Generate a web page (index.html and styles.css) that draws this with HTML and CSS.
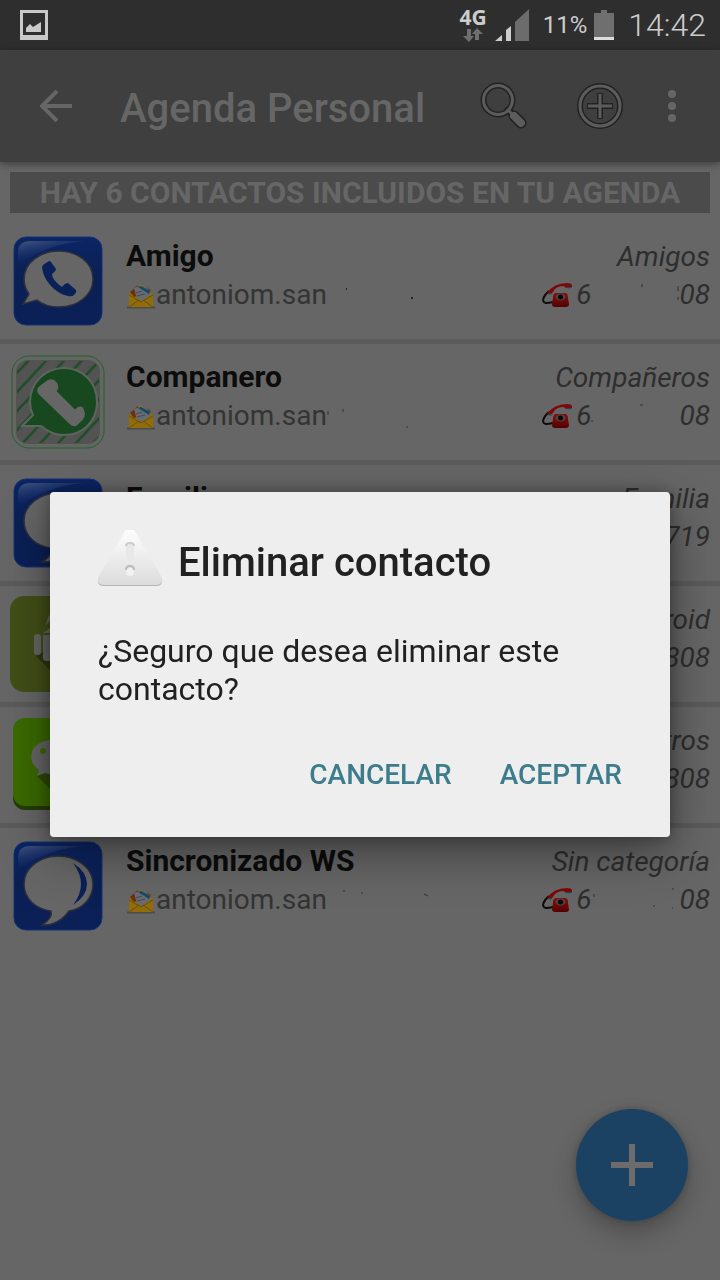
FILE: index.html
```html
<!DOCTYPE html>
<html lang="es">
<head>
<meta charset="utf-8">
<meta name="viewport" content="width=device-width, initial-scale=1">
<title>Agenda Personal</title>
<link rel="stylesheet" href="styles.css">
</head>
<body>
<svg class="defs" aria-hidden="true">
  <defs>
    <linearGradient id="blue" x1="0" y1="0" x2="0" y2="1"><stop offset="0" stop-color="#0c2564"/><stop offset=".5" stop-color="#0a1f53"/><stop offset="1" stop-color="#0a2058"/></linearGradient>
    <linearGradient id="gloss" x1="0" y1="0" x2=".6" y2="1"><stop offset="0" stop-color="#5a6a8c" stop-opacity=".7"/><stop offset=".7" stop-color="#2a4480" stop-opacity="0"/></linearGradient>
    <linearGradient id="warn" x1="0" y1="0" x2="0" y2="1"><stop offset="0" stop-color="#fff"/><stop offset="1" stop-color="#dcdcdc"/></linearGradient>
    <linearGradient id="red" x1="0" y1="0" x2="0" y2="1"><stop offset="0" stop-color="#900a0a"/><stop offset="1" stop-color="#520303"/></linearGradient>
    <linearGradient id="gold" x1="0" y1="0" x2="0" y2="1"><stop offset="0" stop-color="#8f6d1c"/><stop offset="1" stop-color="#8f6700"/></linearGradient>
    <pattern id="stripes" width="13" height="13" patternUnits="userSpaceOnUse" patternTransform="rotate(43)"><path d="M5 0V13" stroke="#1c4d25" stroke-width="2.500"/></pattern>
  </defs>
  <symbol id="tile" viewBox="0 0 96 96">
    <rect x="4" y="4" width="88" height="88" rx="12" fill="url(#blue)" stroke="#153175" stroke-width="1"/>
    <path d="M8 32V20Q8 8 20 8H76Q38 10 8 32Z" fill="url(#gloss)"/>
  </symbol>
  <symbol id="av-call" viewBox="0 0 96 96">
    <use href="#tile"/>
    <path d="M49 18C68 18 83 30 83 46S68 74 49 74C41 74 33 72 27 67L13 71L19 61Q14 54 14 46C14 30 30 18 49 18Z" fill="#666" stroke="#2c303c" stroke-width="1.500"/>
    <path d="M33 32L39 28Q40 28 41 29L46 36Q46 38 42 41Q42 47 52 54Q55 50 58 50L66 57Q67 59 64 62Q62 64 58 63C44 60 33 46 32 34Z" fill="#0a2059"/>
  </symbol>
  <symbol id="av-chat" viewBox="0 0 96 96">
    <use href="#tile"/>
    <path d="M48 18C67 18 83 30 83 46C83 60 73 71 59 73Q48 88 32 87Q43 80 41 73C25 71 14 60 14 46C14 30 30 18 48 18Z" fill="#666" stroke="#2c303c" stroke-width="1.500"/>
    <path d="M63 25Q77 34 77 46T63 67Q79 46 63 25Z" fill="#0a2059"/>
  </symbol>
  <symbol id="av-whats" viewBox="0 0 96 96">
    <rect x="2" y="2" width="92" height="92" rx="17" fill="#646664" stroke="#24602f" stroke-width="1"/>
    <rect x="6" y="6" width="84" height="84" rx="12" fill="#535353"/>
    <rect x="7" y="7" width="82" height="82" rx="10" fill="url(#stripes)"/>
    <path d="M54 14C73 14 87 29 87 48S73 81 54 81C45 81 38 78 31 72L12 72L23 61Q20 55 20 48C20 29 35 14 54 14Z" fill="#17481f" stroke="#5c665d" stroke-width="2"/>
    <path d="M29 39Q27 36 30 33L38 27Q43 25 46 29Q49 34 45 37L65 57Q69 52 72 54Q76 61 72 65L67 70Q64 73 60 69Z" fill="#666" stroke="#666" stroke-width="2" stroke-linejoin="round"/>
  </symbol>
  <symbol id="av-android" viewBox="0 0 96 96">
    <rect width="96" height="96" rx="14" fill="#424f17"/>
    <path d="M26 60L62 96H82Q96 96 96 82V60L70 34Z" fill="#2b350e"/>
    <path d="M33 37Q34 28 42 24L39 19M33 37H63Q62 27 54 24L57 19" fill="#666"/>
    <rect x="24" y="38" width="7" height="21" rx="3" fill="#666"/><rect x="65" y="38" width="7" height="21" rx="3" fill="#666"/>
    <path d="M33 39H63V63Q63 65 60 65H57V75H51V65H45V75H40V65H36Q33 65 33 62Z" fill="#666"/>
  </symbol>
  <symbol id="av-bubble" viewBox="0 0 96 96">
    <rect x="3" y="6" width="90" height="87" rx="12" fill="#243d05"/>
    <rect x="3" y="1" width="90" height="88" rx="12" fill="#3b6a00"/>
    <path d="M27 59L57 89H90V52L70 32Z" fill="#2b4a06"/>
    <path d="M43 23C56 23 66 31 66 41S56 58 43 58L35 56L27 59L29 53C15 44 20 23 43 23Z" fill="#666"/>
    <circle cx="33" cy="34" r="3" fill="#3b6a00"/><circle cx="53" cy="34" r="3" fill="#3b6a00"/>
  </symbol>
  <symbol id="mail" viewBox="0 0 28 26">
    <path d="M0 24.500H28" stroke="#4c4c4c" stroke-width="2"/>
    <path d="M2 11L13 1L26 11V24H2Z" fill="url(#gold)"/>
    <path d="M3 9L11 2L12 12L7 14Z" fill="#6b3012"/><path d="M20 4L24 7L22 11Z" fill="#6e4712"/>
    <path d="M7 5L13 3L23 10L22 14L14 20L10 16Z" fill="#686c70"/>
    <path d="M11 4L14 3L23 8L22 11Z" fill="#0d4a76"/>
    <path d="M9 10L15 8M10 13L18 11" stroke="#444a50"/>
    <path d="M2 11L14 18L26 11V24H2Z" fill="#916c0a"/>
    <path d="M2 24L12 17M26 24L16 17M2 12L14 19L26 12" stroke="#6e5108" fill="none"/>
  </symbol>
  <symbol id="phone" viewBox="0 0 30 26">
    <path d="M7 9C1 14-1 20 4 21Q7 21 11 20" fill="none" stroke="#0c0c0c" stroke-width="2"/>
    <path d="M5 11Q12 1 25 1Q31 1 30 5L24 6Q23 4 20 4Q13 5 11 10Q8 13 5 11Z" fill="#7d0808"/>
    <path d="M24 5L30 5Q29 7 25 6ZM6 12Q10 12 11 10Q10 14 6 12Z" fill="#0c506b"/>
    <path d="M13 11H24Q26 12 26 16L27 22Q27 25 24 25H13Q10 25 10 22L11 16Q11 12 13 11Z" fill="url(#red)"/>
    <ellipse cx="18.500" cy="15" rx="5" ry="3.500" fill="#4b4546"/><circle cx="18.500" cy="15" r="2.500" fill="#070707"/>
  </symbol>
</svg>

<header class="status">
  <svg class="shot" width="28" height="30" viewBox="0 0 28 30"><path fill="#c9c9c9" fill-rule="evenodd" d="M0 0H28V30H0ZM3 3V25H25V3Z"/><path fill="#c9c9c9" d="M6 22V18L10 14L13 17L21 12V22Z"/></svg>
  <span class="net">4G<svg width="20" height="15" viewBox="0 0 20 15"><path fill="#6f6f6f" d="M4 1H8V8H11L6 14L0 8H4ZM12 12V6H9L14 0L20 6H16V12Z"/></svg></span>
  <svg class="signal" width="34" height="32" viewBox="0 0 34 32"><path fill="#ccc" d="M0 32L7 26V32ZM11 21L16 17V32H11Z"/><path fill="#6c6c6c" d="M20 13L34 0V32H20Z"/></svg>
  <span class="percent">11%</span>
  <svg class="battery" width="20" height="30" viewBox="0 0 20 30"><path fill="#6f6f6f" d="M0 3H7V0H13V3H20V30H0Z"/><path fill="#ddd" d="M0 27H20V30H0Z"/></svg>
  <time class="clock">14:42</time>
</header>

<div class="toolbar">
  <button class="tool back" aria-label="Volver"><svg width="32" height="32" viewBox="0 0 32 32"><path d="M17 1L2 16L17 31M3 16H32" fill="none" stroke="#666" stroke-width="4"/></svg></button>
  <h1 class="title">Agenda Personal</h1>
  <button class="tool search" aria-label="Buscar"><svg width="48" height="48" viewBox="0 0 48 48"><g fill="none" stroke="#222" stroke-linecap="round"><circle cx="18" cy="18" r="14.500" stroke-width="6"/><path d="M28 28L31 31" stroke-width="7"/><path d="M34 34L41 41" stroke-width="11"/></g><g fill="none" stroke="#5c5c5c" stroke-linecap="round"><circle cx="18" cy="18" r="14.500" stroke-width="3"/><path d="M28 28L31 31" stroke-width="3"/><path d="M34 34L41 41" stroke-width="8"/></g></svg></button>
  <button class="tool add" aria-label="Añadir"><svg width="48" height="48" viewBox="0 0 48 48"><g fill="none" stroke="#222" stroke-width="6"><circle cx="24" cy="24" r="20"/><path d="M24 11V37M11 24H37"/></g><g fill="none" stroke="#5c5c5c" stroke-width="3"><circle cx="24" cy="24" r="20"/><path d="M24 12V36M12 24H36"/></g></svg></button>
  <button class="tool more" aria-label="Más opciones"><svg width="8" height="32" viewBox="0 0 8 32"><g fill="#666"><circle cx="4" cy="4" r="4"/><circle cx="4" cy="16" r="4"/><circle cx="4" cy="28" r="4"/></g></svg></button>
</div>

<main class="content">
  <p class="banner">HAY 6 CONTACTOS INCLUIDOS EN TU AGENDA</p>
  <ul class="list">
    <li class="row">
      <svg class="avatar"><use href="#av-call"/></svg>
      <div class="who"><h2 class="name">Amigo</h2><p class="mail"><svg class="mail-icon"><use href="#mail"/></svg>antoniom.san<svg class="specks" viewBox="0 0 120 24"><path d="M19 6H20M84 15H86" stroke="#222" stroke-width="2"/></svg></p></div>
      <div class="meta"><p>Amigos</p><p class="phone"><svg class="phone-icon"><use href="#phone"/></svg><span>6</span><svg class="masked" viewBox="0 0 88 24"><path d="M51 1V4M87 3V8M87 14V17" stroke="#2e2e2e"/></svg><span>08</span></p></div>
    </li>
    <li class="row">
      <svg class="avatar"><use href="#av-whats"/></svg>
      <div class="who"><h2 class="name">Companero</h2><p class="mail"><svg class="mail-icon"><use href="#mail"/></svg>antoniom.san<svg class="specks" viewBox="0 0 120 24"><path d="M1 7V11M16 5V8M79 23H81" stroke="#333"/></svg></p></div>
      <div class="meta"><p>Compañeros</p><p class="phone"><svg class="phone-icon"><use href="#phone"/></svg><span>6</span><svg class="masked" viewBox="0 0 88 24"><path d="M49 1H52M1 16V18" stroke="#333"/></svg><span>08</span></p></div>
    </li>
    <li class="row">
      <svg class="avatar"><use href="#av-chat"/></svg>
      <div class="who"><h2 class="name">Familia</h2></div>
      <div class="meta"><p>Familia</p><p class="phone">719</p></div>
    </li>
    <li class="row">
      <svg class="avatar"><use href="#av-android"/></svg>
      <div class="who"></div>
      <div class="meta"><p>Android</p><p class="phone">808</p></div>
    </li>
    <li class="row">
      <svg class="avatar"><use href="#av-bubble"/></svg>
      <div class="who"></div>
      <div class="meta"><p>Otros</p><p class="phone">808</p></div>
    </li>
    <li class="row">
      <svg class="avatar"><use href="#av-chat"/></svg>
      <div class="who"><h2 class="name">Sincronizado WS</h2><p class="mail"><svg class="mail-icon"><use href="#mail"/></svg>antoniom.san<svg class="specks" viewBox="0 0 120 24"><path d="M16 3H18M34 5H36M97 6L101 8" stroke="#333"/></svg></p></div>
      <div class="meta"><p>Sin categoría</p><p class="phone"><svg class="phone-icon"><use href="#phone"/></svg><span>6</span><svg class="masked" viewBox="0 0 88 24"><path d="M3 6V9M63 17V19M81 1H83M81 20H82" stroke="#333"/></svg><span>08</span></p></div>
    </li>
  </ul>
</main>

<button class="fab" aria-label="Nuevo contacto"><svg width="44" height="44" viewBox="0 0 44 44"><path d="M22 1V43M1 22H43" stroke="#6c6c6c" stroke-width="6"/></svg></button>

<div class="overlay">
  <section class="dialog" role="alertdialog" aria-labelledby="dlg-title" aria-describedby="dlg-text">
    <div class="dialog-head">
      <svg width="64" height="64" viewBox="0 0 64 64"><path d="M27 2Q32-5 37 2L63 48Q66 56 58 56H6Q-2 56 1 48Z" fill="#b5b5b5"/><path d="M27 1Q32-6 37 1L63 46Q66 55 58 55H6Q-2 55 1 46Z" fill="url(#warn)"/><rect x="28" y="13" width="8" height="18" rx="4" fill="#e8e8e8"/><path d="M28 16Q28 13 32 13T36 16" fill="none" stroke="#ccc" stroke-width="2"/><circle cx="32" cy="42" r="4" fill="#f2f2f2"/><path d="M28 40Q28 36 32 36T36 40" fill="none" stroke="#bbb" stroke-width="2"/></svg>
      <h2 class="dialog-title" id="dlg-title">Eliminar contacto</h2>
    </div>
    <p class="dialog-text" id="dlg-text">¿Seguro que desea eliminar este contacto?</p>
    <div class="actions">
      <button class="action">CANCELAR</button>
      <button class="action">ACEPTAR</button>
    </div>
  </section>
</div>
</body>
</html>
```

FILE: styles.css
```css
* { box-sizing: border-box; }
body, h1, h2, p, ul { margin: 0; padding: 0; }
body { min-height: 100vh; background: #666; font-family: Roboto, "Liberation Sans", sans-serif; color: #333; }
button { border: 0; background: none; font: inherit; padding: 0; cursor: pointer; }
svg { display: block; flex: none; }
.defs { position: absolute; width: 0; height: 0; }

.status { display: flex; align-items: center; height: 50px; padding: 0 14px 0 20px; background: #2e2e2e; color: #ccc; }
.shot { margin-right: auto; }
.net { display: flex; flex-direction: column; align-items: center; font: 700 21px/18px "Open Sans", sans-serif; gap: 2px; }
.signal { margin: 0 14px 0 8px; }
.percent { font-size: 24px; }
.battery { margin: 0 14px 0 7px; }
.clock { font-size: 32px; font-weight: 300; }

.toolbar { position: relative; display: flex; align-items: center; height: 112px; padding: 0 44px 0 40px; background: #3f3f3f; box-shadow: 0 2px 8px rgba(0, 0, 0, .4); }
.title { flex: 1; padding: 4px 0 0 48px; font-size: 40px; font-weight: 500; color: #666; white-space: nowrap; }
.add { margin: 0 44px 0 48px; }

.banner { margin: 10px; background: #4b4b4b; color: #666; font-size: 30px; font-weight: 700; line-height: 41px; text-align: center; }
.list { list-style: none; }
.row { display: flex; align-items: center; gap: 20px; min-height: 121px; padding: 0 10px; border-bottom: 5px solid #5b5b5b; }
.row:last-child { border-bottom-color: transparent; }
.avatar { width: 96px; height: 96px; }
.who { flex: 1; align-self: flex-start; padding-top: 13px; font-size: 28px; line-height: 39px; }
.name { font-size: 30px; font-weight: 700; color: #0c0c0c; }
.mail, .phone { display: flex; align-items: center; }
.mail { color: #343434; }
.mail-icon { width: 28px; height: 26px; margin: 2px 1px 0; }
.specks { width: 120px; height: 24px; }
.meta { display: flex; flex-direction: column; align-items: flex-end; align-self: flex-start; padding-top: 15px; font-size: 28px; line-height: 38px; font-style: italic; color: #2e2e2e; }
.phone-icon { width: 30px; height: 26px; margin-right: 4px; }
.masked { width: 88px; height: 24px; }

.fab { position: fixed; right: 32px; bottom: 59px; display: grid; place-items: center; width: 112px; height: 112px; border-radius: 50%; background: #1b4263; box-shadow: 0 12px 24px rgba(0, 0, 0, .25), 0 0 8px rgba(0, 0, 0, .2); }

.overlay { position: fixed; inset: 48px 0 0; display: flex; align-items: center; justify-content: center; padding: 0 50px; }
.dialog { flex: 1; max-width: 620px; padding: 38px 32px 26px 48px; border-radius: 4px; background: #eee; color: #212121; box-shadow: 0 16px 48px rgba(0, 0, 0, .4), 0 0 16px rgba(0, 0, 0, .3); }
.dialog-head { display: flex; align-items: center; gap: 16px; }
.dialog-title { font-size: 40px; font-weight: 500; padding-top: 2px; }
.dialog-text { margin: 38px 16px 31px 0; font-size: 32px; line-height: 38px; }
.actions { display: flex; justify-content: flex-end; gap: 16px; }
.action { height: 72px; padding: 0 16px; font-size: 28px; font-weight: 500; color: #3d7c8b; }
```
